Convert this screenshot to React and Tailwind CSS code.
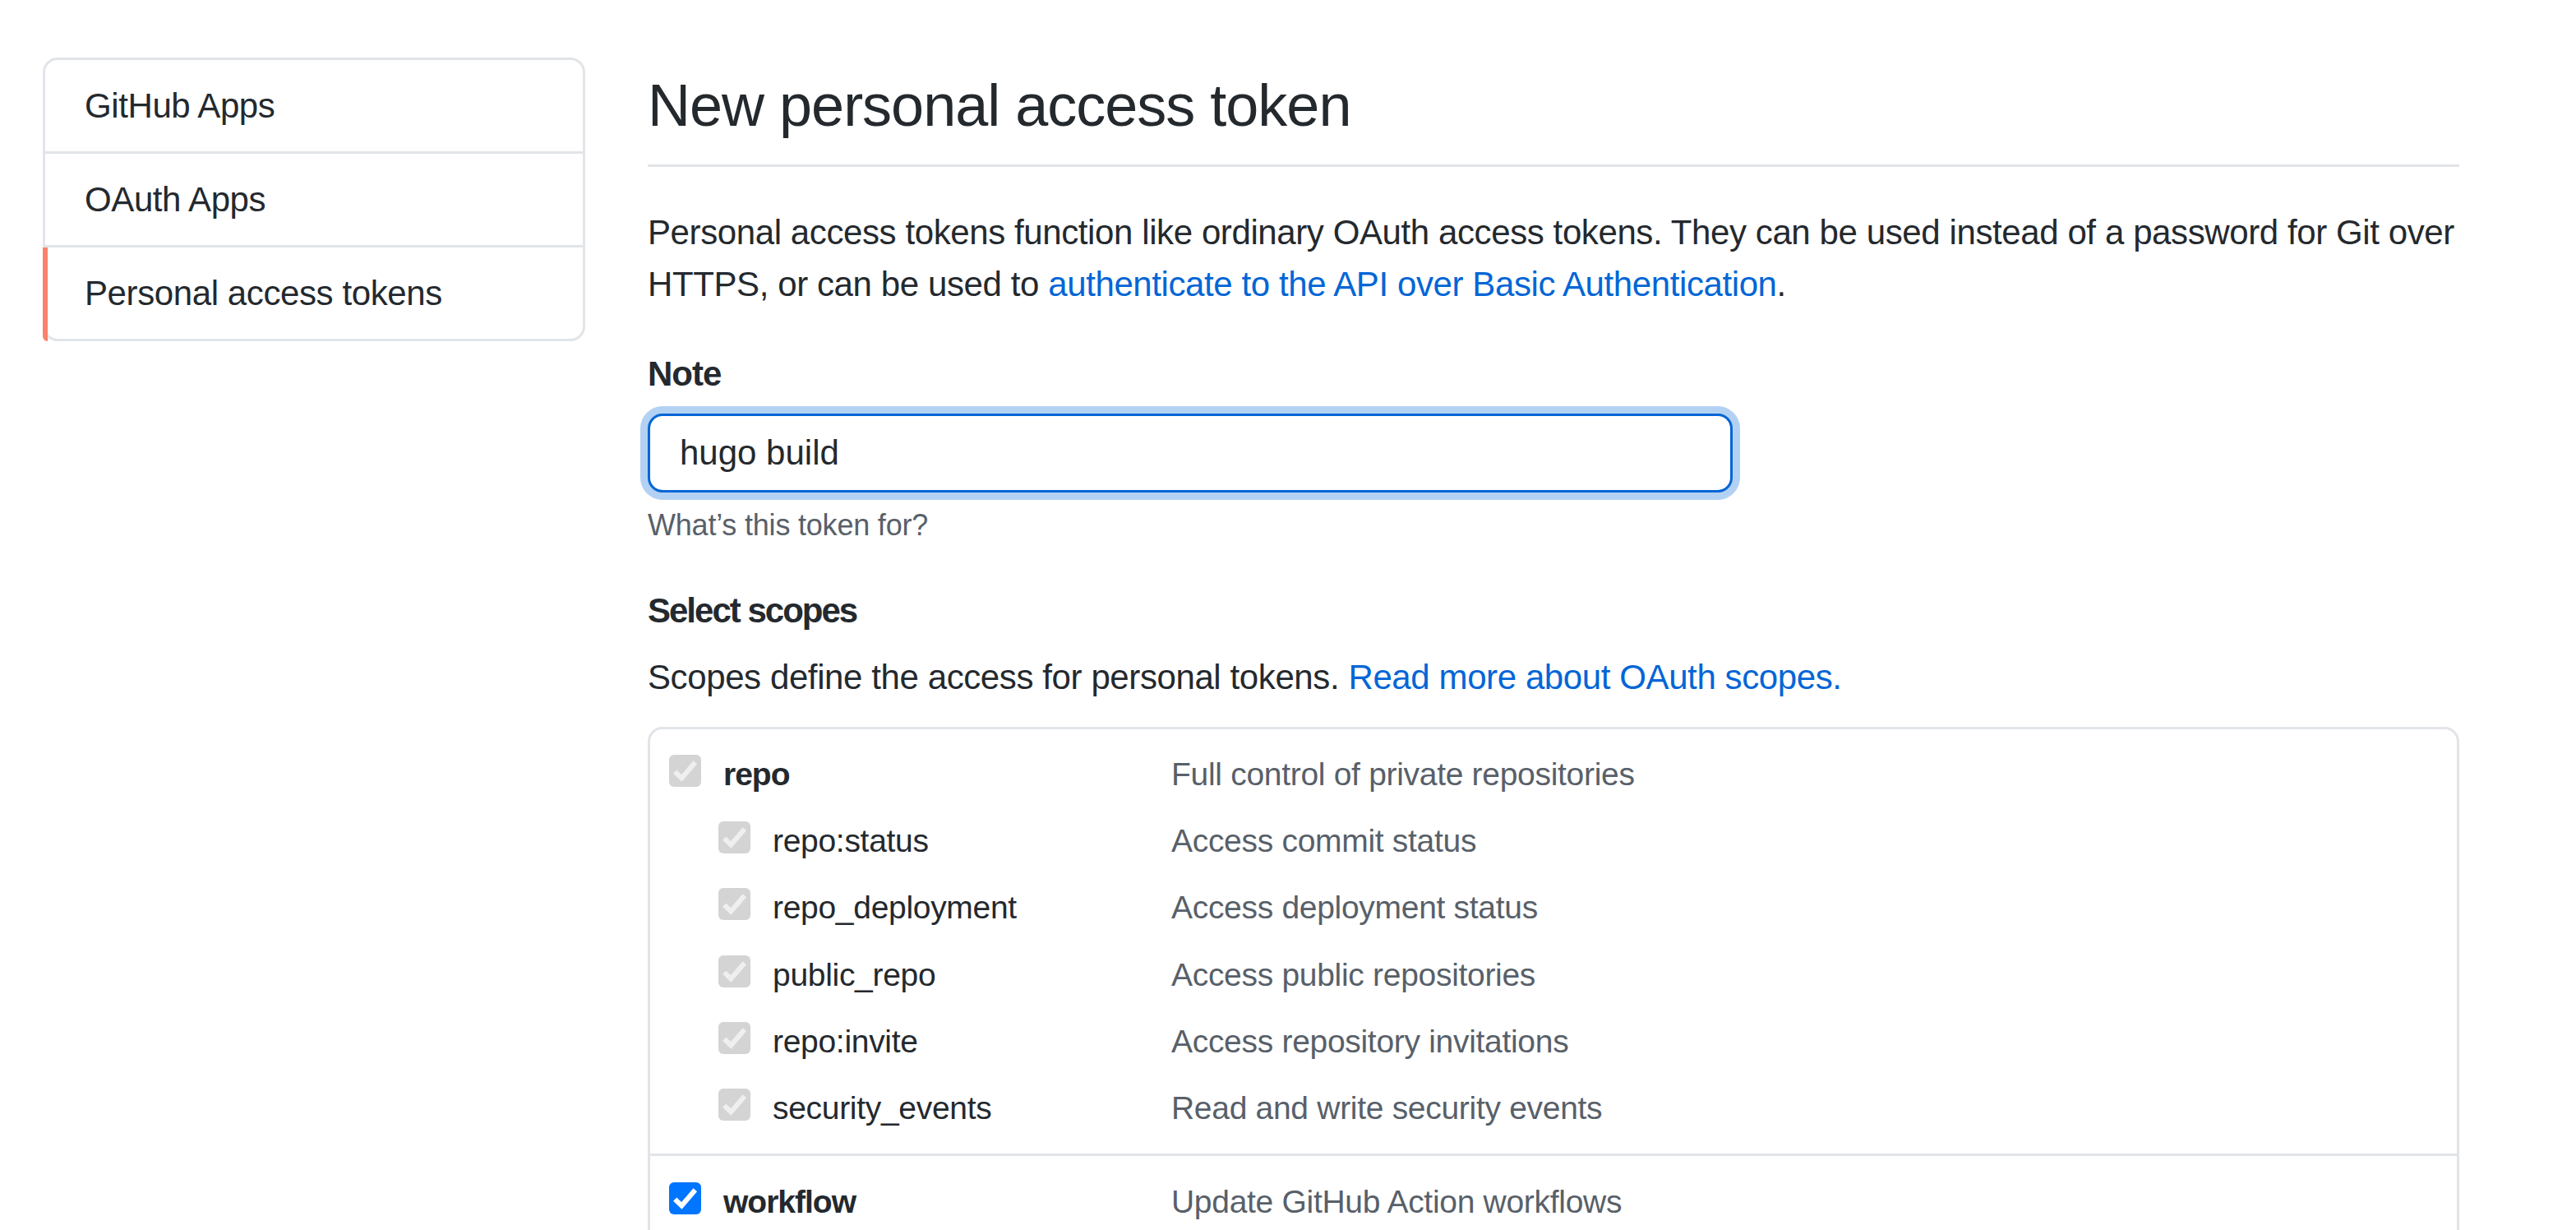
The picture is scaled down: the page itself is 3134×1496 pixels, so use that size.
import React from "react";

function Check({ disabled }) {
  return (
    <div
      className={`mt-[8px] flex h-[39px] w-[39px] shrink-0 items-center justify-center rounded-[6px] ${
        disabled ? "bg-[#d4d4d4]" : "bg-[#0075ff]"
      }`}
    >
      <svg viewBox="0 0 13 13" className="h-[39px] w-[39px]">
        <polyline
          points="2.4,6.9 5.1,9.5 10.6,3.1"
          fill="none"
          stroke={disabled ? "#efefef" : "#ffffff"}
          strokeWidth="2"
          strokeLinejoin="miter"
        />
      </svg>
    </div>
  );
}

function Row({ name, desc, sub, bold, disabled }) {
  return (
    <div className="flex text-[39px] leading-[63px] tracking-[-0.3px]">
      <div className={`flex w-[611px] shrink-0 items-start ${sub ? "pl-[60px]" : ""}`}>
        <Check disabled={disabled} />
        <span className={`ml-[27px] text-[#24292e] ${bold ? "font-bold tracking-[-1px]" : ""}`}>{name}</span>
      </div>
      <div className="text-[#586069]">{desc}</div>
    </div>
  );
}

export default function App() {
  const items = ["GitHub Apps", "OAuth Apps", "Personal access tokens"];
  return (
    <div className="min-h-screen bg-white font-['Liberation_Sans',Arial,sans-serif] text-[42px] leading-[63px] tracking-[-0.4px] text-[#24292e]">
      <div className="flex items-start gap-[76px] pl-[52px] pt-[70px]">
        <nav className="w-[660px] shrink-0 rounded-[18px] border-[3px] border-[#e1e4e8] bg-white">
          {items.map((t, i) => (
            <div
              key={t}
              className={`relative px-[48px] py-[24px] ${i > 0 ? "border-t-[3px] border-[#e1e4e8]" : ""}`}
            >
              {i === 2 && (
                <span className="absolute -bottom-[3px] -left-[3px] top-0 w-[6px] rounded-bl-[18px] bg-[#f9826c]" />
              )}
              {t}
            </div>
          ))}
        </nav>

        <main className="w-[2204px] shrink-0 pt-[13px]">
          <div className="border-b-[3px] border-[#e1e4e8] pb-[27px]">
            <h2 className="text-[72px] font-normal leading-[90px] tracking-[-1px]">New personal access token</h2>
          </div>

          <p className="mt-[48px] whitespace-nowrap">
            Personal access tokens function like ordinary OAuth access tokens. They can be used instead of a password for Git over
            <br />
            HTTPS, or can be used to{" "}
            <a href="#" className="text-[#0366d6]">
              authenticate to the API over Basic Authentication
            </a>
            .
          </p>

          <div className="mt-[46px] font-bold tracking-[-1px]">Note</div>
          <input
            readOnly
            defaultValue="hugo build"
            className="mt-[17px] block h-[96px] w-[1320px] rounded-[18px] border-[3px] border-[#0366d6] bg-white px-[36px] text-[42px] leading-[60px] tracking-[0px] text-[#24292e] shadow-[0_0_0_9px_rgba(3,102,214,0.3)] outline-none"
          />
          <div className="mt-[13px] text-[36px] leading-[54px] tracking-[-0.2px] text-[#586069]">What’s this token for?</div>

          <div className="mt-[45px] font-bold tracking-[-2px]">Select scopes</div>
          <p className="mt-[18px]">
            Scopes define the access for personal tokens.{" "}
            <a href="#" className="text-[#0366d6]">
              Read more about OAuth scopes.
            </a>
          </p>

          <div className="mt-[29px] rounded-[18px] border-[3px] border-[#e1e4e8]">
            <div className="flex flex-col gap-[18.2px] px-[23px] pb-[24px] pt-[23px]">
              <Row name="repo" desc="Full control of private repositories" bold disabled />
              <Row name="repo:status" desc="Access commit status" sub disabled />
              <Row name="repo_deployment" desc="Access deployment status" sub disabled />
              <Row name="public_repo" desc="Access public repositories" sub disabled />
              <Row name="repo:invite" desc="Access repository invitations" sub disabled />
              <Row name="security_events" desc="Read and write security events" sub disabled />
            </div>
            <div className="border-t-[3px] border-[#e1e4e8] px-[23px] pb-[24px] pt-[24px]">
              <Row name="workflow" desc="Update GitHub Action workflows" bold />
            </div>
          </div>
        </main>
      </div>
    </div>
  );
}
